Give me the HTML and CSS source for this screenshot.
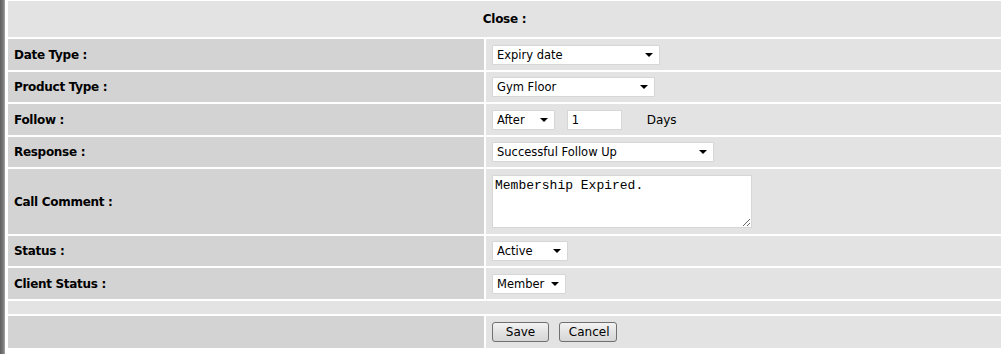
FILE: index.html
```html
<!DOCTYPE html>
<html lang="en">
<head>
    <meta charset="UTF-8">
    <title>Close Call</title>
    <link rel="stylesheet" href="styles.css">
</head>
<body>

<div class="frame-edge"></div>

<div class="page">
    <form action="#" method="POST">
    <table class="form-table">
        <tr class="row-head">
            <td colspan="2">Close :</td>
        </tr>
        <tr class="row-a">
            <td class="label">Date Type :</td>
            <td class="field">
                <select class="sel sel-date">
                    <option>Expiry date</option>
                </select>
            </td>
        </tr>
        <tr class="row-b">
            <td class="label">Product Type :</td>
            <td class="field">
                <select class="sel sel-product">
                    <option>Gym Floor</option>
                </select>
            </td>
        </tr>
        <tr class="row-a">
            <td class="label">Follow :</td>
            <td class="field">
                <select class="sel sel-after">
                    <option>After</option>
                </select>
                <input type="text" class="txt-days" value="1">
                <span class="days">Days</span>
            </td>
        </tr>
        <tr class="row-b">
            <td class="label">Response :</td>
            <td class="field">
                <select class="sel sel-response">
                    <option>Successful Follow Up</option>
                </select>
            </td>
        </tr>
        <tr class="row-comment">
            <td class="label">Call Comment :</td>
            <td class="field">
                <textarea class="comment">Membership Expired.</textarea>
            </td>
        </tr>
        <tr class="row-b">
            <td class="label">Status :</td>
            <td class="field">
                <select class="sel sel-status">
                    <option>Active</option>
                </select>
            </td>
        </tr>
        <tr class="row-a">
            <td class="label">Client Status :</td>
            <td class="field">
                <select class="sel sel-client">
                    <option>Member</option>
                </select>
            </td>
        </tr>
        <tr class="row-blank">
            <td colspan="2"></td>
        </tr>
        <tr class="row-buttons">
            <td class="label"></td>
            <td class="field">
                <button type="submit" class="btn btn-save">Save</button>
                <button type="button" class="btn btn-cancel">Cancel</button>
            </td>
        </tr>
    </table>
    </form>
</div>

</body>
</html>
```

FILE: styles.css
```css
/* Reset */
* {
    box-sizing: border-box;
    margin: 0;
    padding: 0;
}

body {
    display: flex;
    background: #fff;
    font-family: "DejaVu Sans", Verdana, sans-serif;
    font-size: 12px;
    color: #000;
    height: 100vh;
    overflow: hidden;
}

/* Dark frame border on the left */
.frame-edge {
    width: 5px;
    flex-shrink: 0;
    background: linear-gradient(to right, #5f5f5f 0, #777 3px, #8a8a8a 4px, #b0b0b0 5px);
}

.page {
    padding-left: 1px;
    margin-top: -1px;
}

/* Form table */
.form-table {
    width: 997px;
    border-spacing: 2px;
    background: #fff;
}

.form-table td {
    padding: 0 6px;
    vertical-align: middle;
    background: #e3e3e3;
}

.form-table td.label {
    width: 476px;
    background: #d3d3d3;
    font-weight: bold;
    letter-spacing: -0.3px;
}

.row-head td {
    height: 36px;
    text-align: center;
    font-weight: bold;
    letter-spacing: -0.3px;
}

.row-a td { height: 31px; }
.row-b td { height: 30px; }
.row-comment td { height: 65px; }
.row-blank td { height: 13px; }
.row-buttons td { height: 32px; }

/* Inputs */
.sel {
    appearance: none;
    -webkit-appearance: none;
    height: 20px;
    padding: 0 16px 0 4px;
    border: 1px solid #d6d6d6;
    border-radius: 1px;
    background: #fff url("data:image/svg+xml,%3Csvg xmlns='http://www.w3.org/2000/svg' width='8' height='4'%3E%3Cpath d='M0 0h8L4 4z' fill='%23000'/%3E%3C/svg%3E") no-repeat right 6px center;
    font-family: "DejaVu Sans", Verdana, sans-serif;
    font-size: 11.5px;
    color: #000;
    vertical-align: middle;
}

.sel-date { width: 168px; }
.sel-product { width: 163px; }
.sel-after { width: 63px; }
.sel-response { width: 222px; }
.sel-status { width: 76px; }
.sel-client { width: 74px; }

.txt-days {
    width: 55px;
    height: 20px;
    margin-left: 8px;
    padding: 0 4px;
    border: 1px solid #d6d6d6;
    background: #fff;
    font-family: "DejaVu Sans", Verdana, sans-serif;
    font-size: 11.5px;
    vertical-align: middle;
}

.days {
    margin-left: 21px;
    vertical-align: middle;
}

.comment {
    display: block;
    width: 260px;
    height: 53px;
    padding: 2px 2px;
    border: 1px solid #d6d6d6;
    background: #fff;
    font-family: "Liberation Mono", "Courier New", monospace;
    font-size: 13px;
    color: #000;
    resize: both;
}

/* Buttons */
.btn {
    height: 20px;
    padding: 0 9px;
    border: 1px solid #707070;
    border-radius: 3px;
    background: linear-gradient(#f3f3f3, #e2e2e2 50%, #d6d6d6);
    font-family: "DejaVu Sans", Verdana, sans-serif;
    font-size: 12px;
    color: #000;
    vertical-align: middle;
}

.btn-save { width: 57px; }
.btn-cancel { width: 58px; margin-left: 6px; }
```
